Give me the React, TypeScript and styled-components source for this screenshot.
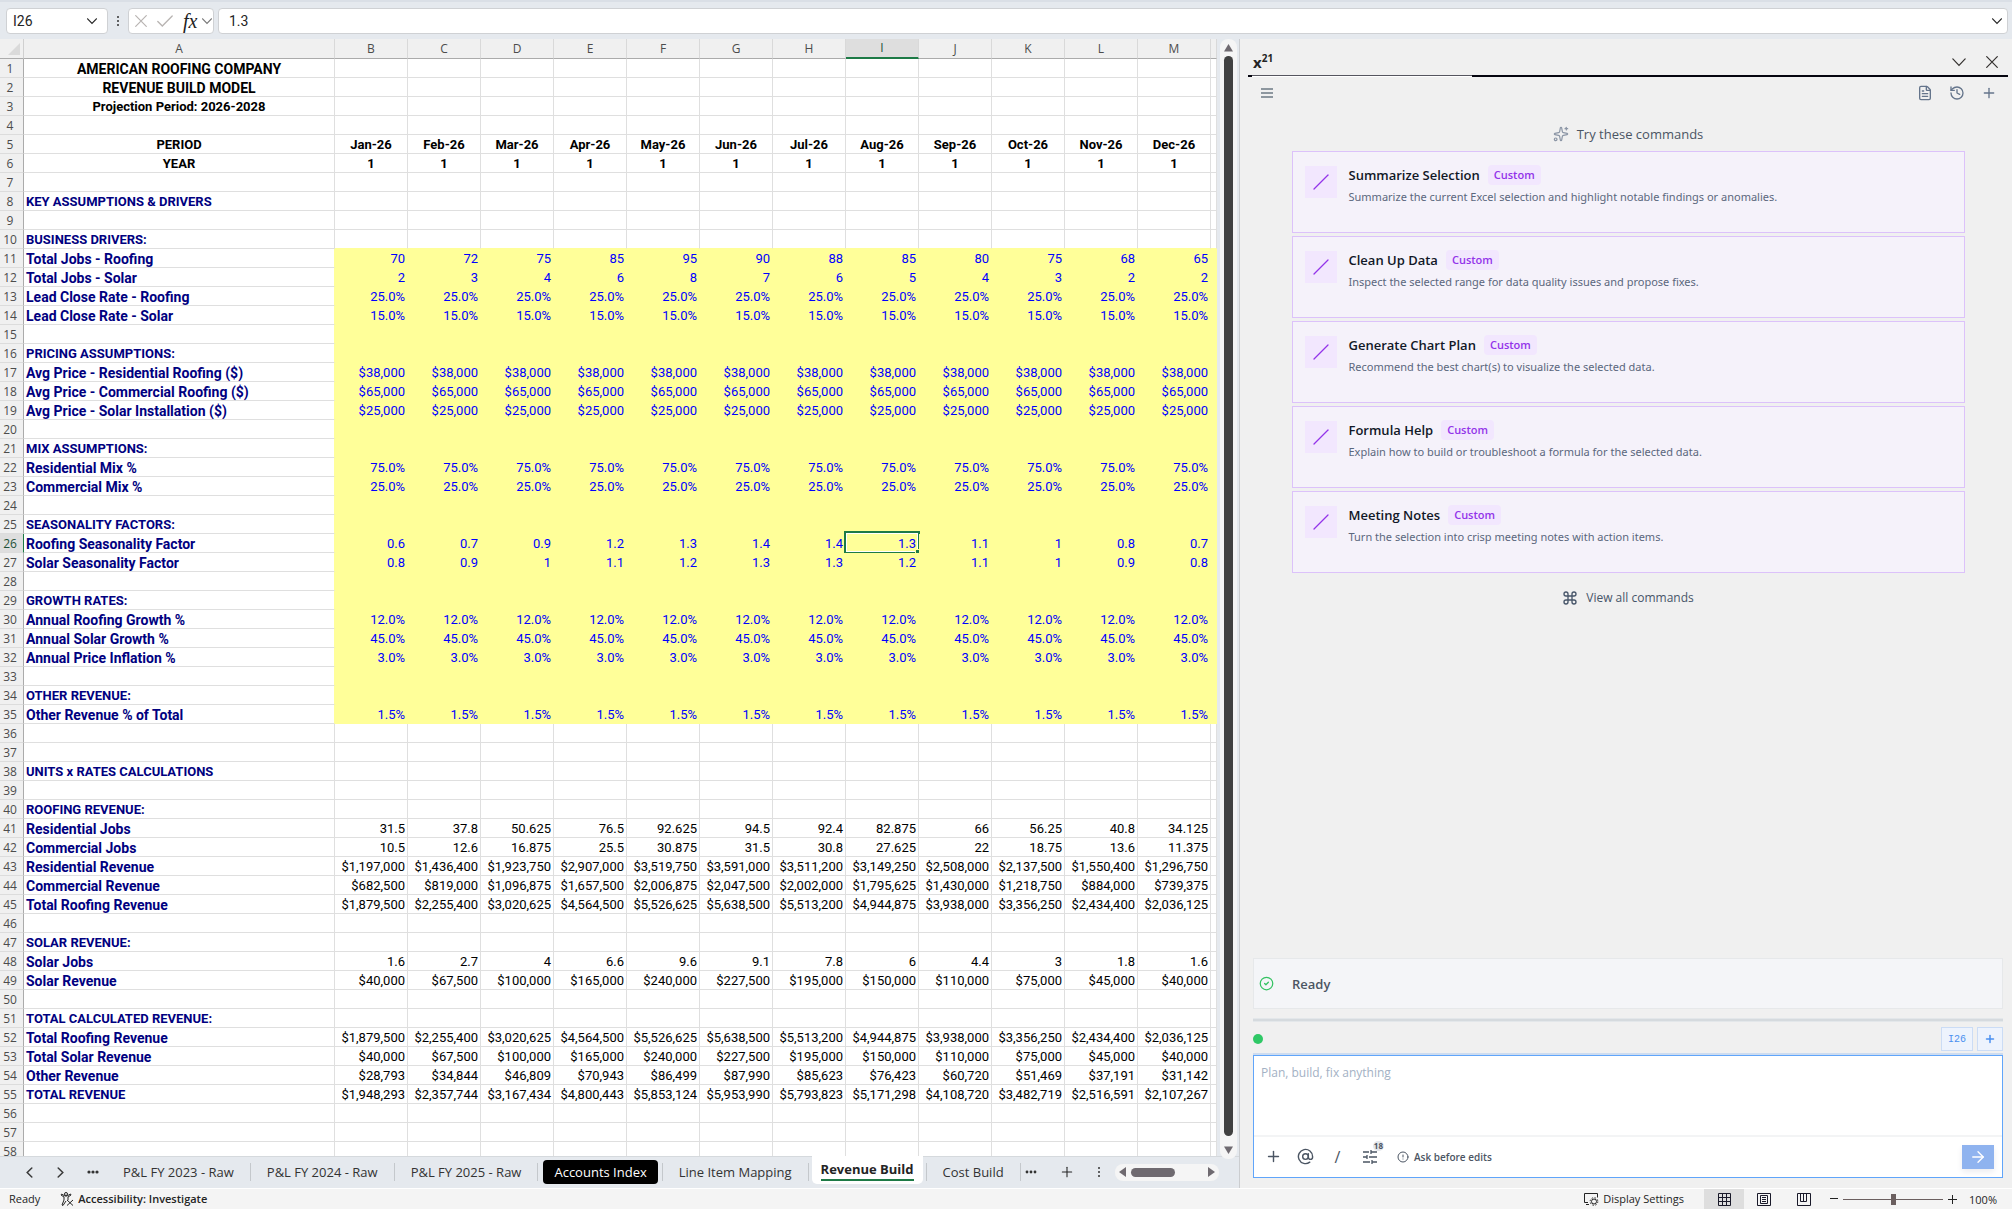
import React from "react";
import styled, { createGlobalStyle, css } from "styled-components";
import {
  ArrowRight,
  AtSign,
  CircleAlert,
  CircleCheck,
  Command,
  FileText,
  History,
  Plus,
  Sparkles,
} from "lucide-react";

const uiFont = '"Open Sans", "Noto Sans", sans-serif';
const cellFont = 'Roboto, "Liberation Sans", sans-serif';

const Global = createGlobalStyle`
  *, *::before, *::after { box-sizing: border-box; }
  body { margin: 0; background: #e5e9ee; color: #242424; font-family: ${uiFont}; }
  button, input, textarea { font: inherit; color: inherit; margin: 0; }
  button { display: inline-flex; align-items: center; justify-content: center; padding: 0; border: 0; background: none; cursor: pointer; flex: none; }
  svg { flex: none; }
`;

const Window = styled.div`
  display: flex;
  flex-direction: column;
  height: 100vh;
  overflow: hidden;
`;

/* ---------- formula bar ---------- */

const FormulaBar = styled.header`
  display: flex;
  align-items: center;
  flex: none;
  height: 39px;
  padding: 0 4px 0 6px;
  border-top: 2px solid #dadfe6;
  background: #e5e9ee;
`;

const barBox = css`
  display: flex;
  align-items: center;
  height: 26px;
  border: 1px solid #cfd1d4;
  border-radius: 4px;
  background: #fff;
`;

const NameBox = styled.label`
  ${barBox}
  width: 102px;
  padding: 0 10px 0 6px;
`;

const BarInput = styled.input`
  flex: 1;
  min-width: 0;
  padding: 0;
  border: 0;
  outline: 0;
  background: none;
  font-family: ${cellFont};
  font-size: 14px;
  line-height: 20px;
`;

const BarDots = styled.span`
  display: flex;
  justify-content: center;
  width: 20px;
`;

const FxBox = styled.div`
  ${barBox}
  gap: 10px;
  width: 86px;
  padding: 0 0 0 6px;
  color: #b8b4b2;
`;

const FxButtons = styled.span`
  display: flex;
  align-items: center;
  gap: 5px;
  color: #777;
`;

const FxButton = styled.button`
  color: #222;
  font-family: "Liberation Serif", serif;
  font-size: 20px;
  font-style: italic;
  line-height: 20px;
`;

const FormulaBox = styled.label`
  ${barBox}
  flex: 1;
  margin-left: 4px;
  padding: 0 5px 0 10px;
`;

/* ---------- main split ---------- */

const Main = styled.main`
  display: grid;
  grid-template-columns: minmax(0, 1fr) 773px;
  flex: 1;
  min-height: 0;
`;

const Workbook = styled.section`
  display: flex;
  flex-direction: column;
  min-width: 0;
  min-height: 0;
`;

const SheetArea = styled.div`
  display: flex;
  flex: 1;
  min-height: 0;
`;

const SheetClip = styled.div`
  flex: 1;
  min-width: 0;
  overflow: hidden;
  background: #fff;
`;

const Sheet = styled.table`
  width: 100%;
  table-layout: fixed;
  border-collapse: separate;
  border-spacing: 0;
  font-family: ${cellFont};
  font-size: 13px;
  line-height: 16px;
`;

const Col = styled.col<{ $w?: number }>`
  width: ${(p) => (p.$w ? `${p.$w}px` : "auto")};
`;

const Corner = styled.td`
  height: 20px;
  padding: 0 3px 3px 0;
  border-right: 1px solid #d0d0d0;
  border-bottom: 1px solid #ababab;
  background: #f0f0f0;
  vertical-align: bottom;
  text-align: right;
  line-height: 0;
`;

const ColHead = styled.th<{ $active?: boolean }>`
  height: 20px;
  padding: 0;
  border-right: 1px solid #d9d9d9;
  border-bottom: ${(p) => (p.$active ? "2px solid #1d7a46" : "1px solid #ababab")};
  background: ${(p) => (p.$active ? "#dedede" : "#f0f0f0")};
  color: ${(p) => (p.$active ? "#1e5138" : "#4c4c4c")};
  font-family: ${uiFont};
  font-size: 12px;
  font-weight: 400;
  line-height: 18px;
`;

const RowHead = styled.th<{ $active?: boolean }>`
  height: 19px;
  padding: 2px 3px 0 0;
  border-right: 1px solid ${(p) => (p.$active ? "#1d7a46" : "#ababab")};
  border-bottom: 1px solid #dcdcdc;
  background: ${(p) => (p.$active ? "#dedede" : "#f0f0f0")};
  color: ${(p) => (p.$active ? "#1e5138" : "#4c4c4c")};
  font-family: ${uiFont};
  font-size: 12px;
  font-weight: 400;
  text-align: center;
`;

type Tone = "title" | "label" | "plain" | "input";

const Cell = styled.td<{
  $tone?: Tone;
  $align?: "left" | "center" | "right";
  $large?: boolean;
  $fill?: boolean;
  $rightFill?: boolean;
  $bottomFill?: boolean;
}>`
  position: relative;
  height: 19px;
  padding: 2px 2px 0;
  border-right: 1px solid ${(p) => (p.$fill || p.$rightFill ? "#ffff99" : "#dfdfdf")};
  border-bottom: 1px solid ${(p) => (p.$fill || p.$bottomFill ? "#ffff99" : "#dfdfdf")};
  background: ${(p) => (p.$fill ? "#ffff99" : "#fff")};
  color: ${(p) => (p.$tone === "label" ? "#000080" : p.$tone === "input" ? "#0000ff" : "#000")};
  font-size: ${(p) => (p.$large ? 14 : 13)}px;
  font-weight: ${(p) => (p.$tone === "label" || p.$tone === "title" ? 700 : 400)};
  text-align: ${(p) => p.$align ?? "right"};
  white-space: nowrap;
`;

const Selection = styled.span`
  position: absolute;
  inset: -3px -2px -2px -2px;
  border: 2px solid #1d7a46;
  box-shadow: inset 0 0 0 1px #fff;

  &::after {
    content: "";
    position: absolute;
    right: -4px;
    bottom: -4px;
    width: 7px;
    height: 7px;
    border: 1px solid #ffff99;
    background: #1d7a46;
  }
`;

/* ---------- scrollbars ---------- */

const Gutter = styled.div`
  display: flex;
  flex: none;
  width: 22px;
  margin-bottom: -3px;
  padding-left: 3px;
  z-index: 1;
`;

const VTrack = styled.div`
  display: flex;
  flex-direction: column;
  align-items: center;
  gap: 4px;
  width: 17px;
  padding: 5px 0;
  border-radius: 8px;
  background: #f5f5f5;
`;

const VThumb = styled.div`
  flex: 1;
  width: 9px;
  margin-bottom: 6px;
  border-radius: 5px;
  background: #414141;
`;

const HTrack = styled.div`
  display: flex;
  align-items: center;
  width: 104px;
  height: 17px;
  padding: 0 4px;
  border-radius: 8px;
  background: #f5f5f5;
`;

const HThumb = styled.div`
  width: 44px;
  height: 9px;
  margin: 0 auto 0 5px;
  border-radius: 5px;
  background: #6f6a70;
`;

/* ---------- sheet tabs ---------- */

const TabBar = styled.nav`
  display: flex;
  align-items: center;
  flex: none;
  height: 32px;
  padding: 0 20px 1px 26px;
  border-top: 1px solid #d5d9dd;
  background: #e5e9ee;
`;

const TabTools = styled.div`
  display: flex;
  align-items: center;
  justify-content: space-between;
  width: 73px;
  margin-right: 8px;
  color: #3a3a3a;
`;

const Tab = styled.button`
  height: 18px;
  padding: 0 16px;
  border-right: 1px solid #c4c8cc;
  color: #333;
  font-size: 13px;
  line-height: 18px;
  white-space: nowrap;
`;

const DarkTab = styled.button`
  height: 24px;
  margin: 0 4px 0 5px;
  padding: 0 11px;
  border-radius: 4px;
  background: #000;
  color: #fff;
  font-size: 13px;
  white-space: nowrap;
`;

const Divider = styled.span`
  width: 1px;
  height: 18px;
  background: #c4c8cc;
`;

const ActiveTab = styled.button`
  align-self: flex-start;
  height: 28px;
  margin: -1px 3px 0;
  padding: 0 9px;
  border-radius: 0 0 5px 5px;
  background: #fff;
  color: #242424;
  font-size: 13px;
  font-weight: 700;
  white-space: nowrap;

  span {
    border-bottom: 2px solid #1d7a46;
    line-height: 20px;
  }
`;

const TabActions = styled.div`
  display: flex;
  align-items: center;
  justify-content: space-between;
  width: 76px;
  margin: 0 14px 0 auto;
`;

/* ---------- side pane ---------- */

const Pane = styled.aside`
  display: flex;
  flex-direction: column;
  min-width: 0;
  padding: 0 4px 0 8px;
  border-left: 1px solid #cbcdd0;
  background: #f0f0f0;
`;

const PaneHeader = styled.header`
  display: flex;
  align-items: center;
  height: 36px;
  padding: 10px 10px 0 5px;
`;

const PaneTitle = styled.h1`
  margin: 0 auto 0 0;
  font-size: 15px;
  font-weight: 700;
  line-height: 20px;

  sup {
    font-size: 10px;
    line-height: 0;
  }
`;

const HeaderButtons = styled.div`
  display: flex;
  gap: 20px;
  color: #33302e;
`;

const Progress = styled.div`
  display: flex;
  height: 2px;
  background: #05050f;

  &::before {
    content: "";
    width: 29%;
    margin-left: 4px;
    border-top: 1px solid #55555f;
    background: #fff;
  }
`;

const PaneToolbar = styled.div`
  display: flex;
  align-items: center;
  gap: 16px;
  height: 32px;
  padding: 0 11px 0 13px;
  color: #64748b;

  button:first-child {
    margin-right: auto;
  }
`;

const Commands = styled.section`
  display: flex;
  flex-direction: column;
  flex: 1;
  gap: 3px;
  width: 100%;
  max-width: 673px;
  margin: 0 auto;
  padding-top: 12px;
`;

const CommandsTitle = styled.h2`
  display: flex;
  align-items: center;
  justify-content: center;
  gap: 8px;
  margin: 0 0 1px;
  color: #4b5563;
  font-size: 13px;
  font-weight: 400;
  line-height: 26px;

  svg {
    color: #8b95a5;
  }
`;

const Card = styled.button`
  align-items: flex-start;
  justify-content: flex-start;
  gap: 12px;
  height: 82px;
  padding: 14px 12px;
  border: 1px solid #dcc2fa;
  background: #f5f2fa;
  text-align: left;
`;

const CardIcon = styled.span`
  display: grid;
  place-items: center;
  width: 32px;
  height: 32px;
  background: #f2e7fe;
  color: #9333ea;
`;

const CardText = styled.span`
  display: flex;
  flex-direction: column;
  gap: 2px;
  margin-top: -1px;
`;

const CardHead = styled.span`
  display: flex;
  align-items: center;
  gap: 8px;
  color: #111827;
  font-size: 13px;
  font-weight: 600;
  line-height: 20px;
`;

const Badge = styled.span`
  padding: 0 6px;
  border-radius: 4px;
  background: #f2e7fe;
  color: #9333ea;
  font-size: 11px;
`;

const CardDesc = styled.span`
  color: #5b677d;
  font-family: "Noto Sans", "Open Sans", sans-serif;
  font-size: 11px;
  line-height: 20px;
`;

const ViewAll = styled.button`
  align-self: center;
  gap: 8px;
  margin-top: 12px;
  color: #475569;
  font-size: 12px;
  font-weight: 500;
  line-height: 20px;
`;

const PaneFooter = styled.footer`
  display: flex;
  flex-direction: column;
  padding: 0 5px 10px;
`;

const ReadyBox = styled.div`
  display: flex;
  align-items: center;
  gap: 18px;
  height: 51px;
  padding: 0 5px;
  border: 1px solid #e6e8ea;
  background: #f4f5f8;
  color: #4b5563;
  font-size: 13px;
  font-weight: 600;

  svg {
    color: #34c262;
  }
`;

const Grip = styled.div`
  height: 4px;
  margin: 9px 0 5px;
  border: 1px solid #e3e7ea;
  border-width: 1px 0;
  background: #d5dade;
`;

const ContextRow = styled.div`
  display: flex;
  align-items: center;
  gap: 4px;
  height: 24px;
`;

const Dot = styled.span`
  width: 10px;
  height: 10px;
  margin-right: auto;
  border-radius: 50%;
  background: #2fc866;
`;

const Chip = styled.button`
  height: 24px;
  padding: 0 6px;
  border: 1px solid #cbdcf5;
  background: #edf3fd;
  color: #4a90f0;
  font-family: "Liberation Mono", monospace;
  font-size: 10px;
`;

const Composer = styled.form`
  display: flex;
  flex-direction: column;
  height: 123px;
  margin-top: 4px;
  border: 1px solid #60a5fa;
  background: #fff;
  box-shadow: 0 -2px 0 #cddcf0;
`;

const Prompt = styled.textarea`
  flex: 1;
  padding: 8px 7px;
  border: 0;
  outline: 0;
  resize: none;
  background: none;
  font-size: 12px;
  line-height: 18px;

  &::placeholder {
    color: #a3b1c4;
    opacity: 1;
  }
`;

const ComposerBar = styled.div`
  display: flex;
  align-items: center;
  height: 42px;
  padding: 0 8px 1px 11px;
  border-top: 2px solid #f3f4f5;
  color: #4b5563;
`;

const ToolButton = styled.button`
  position: relative;
  width: 17px;
  height: 24px;
  margin-right: 15px;
`;

const Count = styled.span`
  position: absolute;
  top: -4px;
  right: -6px;
  padding: 0 1px;
  border-radius: 5px;
  background: #e3e6eb;
  font-size: 8px;
  font-weight: 700;
  line-height: 10px;
`;

const AskButton = styled.button`
  gap: 5px;
  margin: 0 auto 0 4px;
  font-size: 10px;
  font-weight: 600;
  line-height: 16px;
`;

const SendButton = styled.button`
  width: 32px;
  height: 24px;
  background: #8fb3ef;
  color: #fff;
  box-shadow: 0 3px 6px #ececf0;
`;

/* ---------- status bar ---------- */

const StatusBar = styled.footer`
  display: flex;
  align-items: center;
  flex: none;
  height: 21px;
  padding: 0 15px 0 9px;
  border-top: 1px solid #fff;
  background: #f4f4f4;
  color: #242424;
  font-size: 11px;
`;

const StatusItem = styled.button<{ $push?: boolean; $bold?: boolean }>`
  gap: 4px;
  margin-right: ${(p) => (p.$push ? "auto" : "20px")};
  font-weight: ${(p) => (p.$bold ? 600 : 400)};
  line-height: 16px;
`;

const ViewButton = styled.button<{ $active?: boolean }>`
  width: 40px;
  height: 20px;
  background: ${(p) => (p.$active ? "#dedede" : "none")};
`;

const ZoomControl = styled.div`
  display: flex;
  align-items: center;
  gap: 5px;
  margin: 0 12px 0 6px;
`;

const ZoomRange = styled.input`
  width: 100px;
  height: 12px;
  appearance: none;
  background: linear-gradient(#6b5f5f, #6b5f5f) center / 100% 1px no-repeat;

  &::-webkit-slider-thumb {
    appearance: none;
    width: 5px;
    height: 11px;
    background: #6b5f5f;
  }
`;

/* ---------- drawings ---------- */

const Dots = ({ vertical = false, r = 1 }: { vertical?: boolean; r?: number }) => (
  <svg width={vertical ? 4 : 12} height={vertical ? 12 : 4} viewBox={vertical ? "0 0 4 12" : "0 0 12 4"} fill="#333">
    {[2, 6, 10].map((c) => (
      <circle key={c} cx={vertical ? 2 : c} cy={vertical ? c : 2} r={r} />
    ))}
  </svg>
);

const Triangle = ({ points, w, h, fill = "#6f6a70" }: { points: string; w: number; h: number; fill?: string }) => (
  <svg width={w} height={h} viewBox={`0 0 ${w} ${h}`} fill={fill}>
    <polygon points={points} />
  </svg>
);

const Chevron = ({ size = 10 }: { size?: number }) => (
  <svg width={size} height={size} viewBox="0 0 10 10" fill="none" stroke="currentColor" strokeWidth={12 / size} strokeLinecap="round">
    <path d="M.6 2.800 5 7.400 9.400 2.800" />
  </svg>
);

const SideChevron = ({ d }: { d: string }) => (
  <svg width="7" height="11" viewBox="0 0 7 11" fill="none" stroke="currentColor" strokeWidth="1.5" strokeLinecap="round">
    <path d={d} />
  </svg>
);

const Cross = () => (
  <svg width="12" height="12" viewBox="0 0 12 12" stroke="currentColor" strokeWidth="1.2" strokeLinecap="round">
    <path d="M.7.7l10.600 10.600M11.300.7.7 11.300" />
  </svg>
);

const Tick = () => (
  <svg width="16" height="12" viewBox="0 0 16 12" fill="none" stroke="currentColor" strokeWidth="1.3" strokeLinecap="round">
    <path d="M.8 6.500 5.300 11 15.200 1" />
  </svg>
);

const MenuLines = () => (
  <svg width="12" height="12" viewBox="0 0 12 12" stroke="#8d979f" strokeWidth="2">
    <path d="M0 2h12M0 6h12M0 10h12" />
  </svg>
);

const Slash = () => (
  <svg width="16" height="16" viewBox="0 0 16 16" stroke="currentColor" strokeWidth="1.3" strokeLinecap="round">
    <path d="M1 15 15 1" />
  </svg>
);

const Tuning = () => (
  <svg width="14" height="14" viewBox="0 0 14 14" stroke="currentColor" strokeWidth="1.3" fill="none">
    <path d="M0 2h6M8 2h6M8 0v4M0 7h4M6 7h8M4 5v4M0 12h7M9 12h5M9 10v4" />
  </svg>
);

const Accessibility = () => (
  <svg width="14" height="14" viewBox="0 0 14 14" stroke="currentColor" fill="none">
    <circle cx="6" cy="2" r="1.5" />
    <path d="M1 3l3 2v3l-2 5 1 .5L6 9M11 3L8 5v3M1 3l.6-.9L5 4h2l3.500-2 .5 1M7 8l6 5.500M13 8l-6 5.500" />
  </svg>
);

const DisplayGear = () => (
  <svg width="15" height="13" viewBox="0 0 15 13" stroke="currentColor" fill="none">
    <path d="M4 9.500H.5V.5h13v4M2 11.500h3" />
    <circle cx="10" cy="8.500" r="2.500" />
    <circle cx="10" cy="8.500" r="3.800" strokeDasharray="1.500 1.500" />
  </svg>
);

const GridView = () => (
  <svg width="13" height="13" viewBox="0 0 13 13" stroke="#1a1a2a" fill="none">
    <path d="M.5.5h12v12H.5zM4.500.5v12M8.500.5v12M.5 4.500h12M.5 8.500h12" />
  </svg>
);

const PageView = () => (
  <svg width="14" height="13" viewBox="0 0 14 13" stroke="#1a1a2a" fill="none">
    <path d="M.5.5h13v12H.5zM3.500 2.500h7v8h-7zM5 4.500h4M5 6.500h4M5 8.500h4" />
  </svg>
);

const BreakView = () => (
  <svg width="14" height="13" viewBox="0 0 14 13" stroke="#1a1a2a" fill="none">
    <path d="M.5.5h13v12H.5zM3.500.5v8h6v-8M6.500.5v8" />
  </svg>
);

/* ---------- data ---------- */

const columns = ["B", "C", "D", "E", "F", "G", "H", "I", "J", "K", "L", "M"];
const months = ["Jan", "Feb", "Mar", "Apr", "May", "Jun", "Jul", "Aug", "Sep", "Oct", "Nov", "Dec"];
const every = (value: string) => columns.map(() => value);
const list = (text: string) => text.split(" ");

const roofing = list("$1,879,500 $2,255,400 $3,020,625 $4,564,500 $5,526,625 $5,638,500 $5,513,200 $4,944,875 $3,938,000 $3,356,250 $2,434,400 $2,036,125");
const solar = list("$40,000 $67,500 $100,000 $165,000 $240,000 $227,500 $195,000 $150,000 $110,000 $75,000 $45,000 $40,000");

type Line = { label: string; values?: string[]; heading?: boolean };

const lines: Record<number, Line> = {
  1: { label: "AMERICAN ROOFING COMPANY", heading: true },
  2: { label: "REVENUE BUILD MODEL", heading: true },
  3: { label: "Projection Period: 2026-2028", heading: true },
  5: { label: "PERIOD", heading: true, values: months.map((m) => `${m}-26`) },
  6: { label: "YEAR", heading: true, values: every("1") },
  8: { label: "KEY ASSUMPTIONS & DRIVERS" },
  10: { label: "BUSINESS DRIVERS:" },
  11: { label: "Total Jobs - Roofing", values: list("70 72 75 85 95 90 88 85 80 75 68 65") },
  12: { label: "Total Jobs - Solar", values: list("2 3 4 6 8 7 6 5 4 3 2 2") },
  13: { label: "Lead Close Rate - Roofing", values: every("25.0%") },
  14: { label: "Lead Close Rate - Solar", values: every("15.0%") },
  16: { label: "PRICING ASSUMPTIONS:" },
  17: { label: "Avg Price - Residential Roofing ($)", values: every("$38,000") },
  18: { label: "Avg Price - Commercial Roofing ($)", values: every("$65,000") },
  19: { label: "Avg Price - Solar Installation ($)", values: every("$25,000") },
  21: { label: "MIX ASSUMPTIONS:" },
  22: { label: "Residential Mix %", values: every("75.0%") },
  23: { label: "Commercial Mix %", values: every("25.0%") },
  25: { label: "SEASONALITY FACTORS:" },
  26: { label: "Roofing Seasonality Factor", values: list("0.6 0.7 0.9 1.2 1.3 1.4 1.4 1.3 1.1 1 0.8 0.7") },
  27: { label: "Solar Seasonality Factor", values: list("0.8 0.9 1 1.1 1.2 1.3 1.3 1.2 1.1 1 0.9 0.8") },
  29: { label: "GROWTH RATES:" },
  30: { label: "Annual Roofing Growth %", values: every("12.0%") },
  31: { label: "Annual Solar Growth %", values: every("45.0%") },
  32: { label: "Annual Price Inflation %", values: every("3.0%") },
  34: { label: "OTHER REVENUE:" },
  35: { label: "Other Revenue % of Total", values: every("1.5%") },
  38: { label: "UNITS x RATES CALCULATIONS" },
  40: { label: "ROOFING REVENUE:" },
  41: { label: "Residential Jobs", values: list("31.5 37.8 50.625 76.5 92.625 94.5 92.4 82.875 66 56.25 40.8 34.125") },
  42: { label: "Commercial Jobs", values: list("10.5 12.6 16.875 25.5 30.875 31.5 30.8 27.625 22 18.75 13.6 11.375") },
  43: { label: "Residential Revenue", values: list("$1,197,000 $1,436,400 $1,923,750 $2,907,000 $3,519,750 $3,591,000 $3,511,200 $3,149,250 $2,508,000 $2,137,500 $1,550,400 $1,296,750") },
  44: { label: "Commercial Revenue", values: list("$682,500 $819,000 $1,096,875 $1,657,500 $2,006,875 $2,047,500 $2,002,000 $1,795,625 $1,430,000 $1,218,750 $884,000 $739,375") },
  45: { label: "Total Roofing Revenue", values: roofing },
  47: { label: "SOLAR REVENUE:" },
  48: { label: "Solar Jobs", values: list("1.6 2.7 4 6.6 9.6 9.1 7.8 6 4.4 3 1.8 1.6") },
  49: { label: "Solar Revenue", values: solar },
  51: { label: "TOTAL CALCULATED REVENUE:" },
  52: { label: "Total Roofing Revenue", values: roofing },
  53: { label: "Total Solar Revenue", values: solar },
  54: { label: "Other Revenue", values: list("$28,793 $34,844 $46,809 $70,943 $86,499 $87,990 $85,623 $76,423 $60,720 $51,469 $37,191 $31,142") },
  55: { label: "TOTAL REVENUE", values: list("$1,948,293 $2,357,744 $3,167,434 $4,800,443 $5,853,124 $5,953,990 $5,793,823 $5,171,298 $4,108,720 $3,482,719 $2,516,591 $2,107,267") },
};

const rowNumbers = Array.from({ length: 58 }, (_, i) => i + 1);

const commands = [
  ["Summarize Selection", "Summarize the current Excel selection and highlight notable findings or anomalies."],
  ["Clean Up Data", "Inspect the selected range for data quality issues and propose fixes."],
  ["Generate Chart Plan", "Recommend the best chart(s) to visualize the selected data."],
  ["Formula Help", "Explain how to build or troubleshoot a formula for the selected data."],
  ["Meeting Notes", "Turn the selection into crisp meeting notes with action items."],
];

const SheetRow = ({ n }: { n: number }) => {
  const line = lines[n];
  const fill = n >= 11 && n <= 35;
  const tone: Tone = fill ? "input" : line?.heading ? "title" : "plain";
  const isItem = !!line?.values && /[a-z]/.test(line.label);
  return (
    <tr>
      <RowHead scope="row" $active={n === 26}>{n}</RowHead>
      <Cell
        $tone={line?.heading ? "title" : "label"}
        $align={line?.heading ? "center" : "left"}
        $large={isItem || n <= 2}
        $rightFill={fill}
      >
        {line?.label}
      </Cell>
      {columns.map((c, i) => (
        <Cell key={c} $tone={tone} $align={line?.heading ? "center" : "right"} $fill={fill} $bottomFill={n === 10}>
          {line?.values?.[i]}
          {n === 26 && c === "I" && <Selection />}
        </Cell>
      ))}
      <Cell $fill={fill} $bottomFill={n === 10} />
    </tr>
  );
};

export default function App() {
  return (
    <Window>
      <Global />
      <FormulaBar>
        <NameBox>
          <BarInput aria-label="Name box" defaultValue="I26" />
          <Chevron />
        </NameBox>
        <BarDots><Dots vertical /></BarDots>
        <FxBox>
          <button aria-label="Cancel"><Cross /></button>
          <button aria-label="Enter"><Tick /></button>
          <FxButtons>
            <FxButton>fx</FxButton>
            <button aria-label="More functions"><Chevron /></button>
          </FxButtons>
        </FxBox>
        <FormulaBox>
          <BarInput aria-label="Formula" defaultValue="1.3" />
          <Chevron />
        </FormulaBox>
      </FormulaBar>

      <Main>
        <Workbook>
          <SheetArea>
            <SheetClip>
              <Sheet>
                <colgroup>
                  <Col $w={24} />
                  <Col $w={311} />
                  {columns.map((c) => <Col key={c} $w={73} />)}
                  <Col />
                </colgroup>
                <thead>
                  <tr>
                    <Corner><Triangle w={12} h={12} points="12,0 12,12 0,12" fill="#dadada" /></Corner>
                    <ColHead scope="col">A</ColHead>
                    {columns.map((c) => <ColHead key={c} scope="col" $active={c === "I"}>{c}</ColHead>)}
                    <ColHead />
                  </tr>
                </thead>
                <tbody>
                  {rowNumbers.map((n) => <SheetRow key={n} n={n} />)}
                </tbody>
              </Sheet>
            </SheetClip>
            <Gutter>
              <VTrack>
                <Triangle w={9} h={8} points="4.5,0 9,7.5 0,7.5" />
                <VThumb />
                <Triangle w={9} h={8} points="0,0.5 9,0.5 4.5,8" />
              </VTrack>
            </Gutter>
          </SheetArea>
          <TabBar>
            <TabTools>
              <button aria-label="Previous sheet"><SideChevron d="M5.800 1 1.200 5.500l4.600 4.500" /></button>
              <button aria-label="Next sheet"><SideChevron d="M1.200 1l4.600 4.500L1.200 10" /></button>
              <button aria-label="Hidden sheets"><Dots r={1.6} /></button>
            </TabTools>
            <Tab>P&amp;L FY 2023 - Raw</Tab>
            <Tab>P&amp;L FY 2024 - Raw</Tab>
            <Tab>P&amp;L FY 2025 - Raw</Tab>
            <DarkTab>Accounts Index</DarkTab>
            <Divider />
            <Tab>Line Item Mapping</Tab>
            <ActiveTab><span>Revenue Build</span></ActiveTab>
            <Divider />
            <Tab>Cost Build</Tab>
            <TabActions>
              <button aria-label="More sheets"><Dots r={1.4} /></button>
              <button aria-label="New sheet"><Plus size={16} strokeWidth={1.6} /></button>
              <Dots vertical />
            </TabActions>
            <HTrack>
              <Triangle w={7} h={10} points="7,0 7,10 0,5" />
              <HThumb />
              <Triangle w={7} h={10} points="0,0 0,10 7,5" />
            </HTrack>
          </TabBar>
        </Workbook>

        <Pane>
          <PaneHeader>
            <PaneTitle>x<sup>21</sup></PaneTitle>
            <HeaderButtons>
              <button aria-label="Collapse pane"><Chevron size={14} /></button>
              <button aria-label="Close pane"><Cross /></button>
            </HeaderButtons>
          </PaneHeader>
          <Progress />
          <PaneToolbar>
            <button aria-label="Menu"><MenuLines /></button>
            <button aria-label="Documents"><FileText size={16} /></button>
            <button aria-label="History"><History size={16} /></button>
            <button aria-label="New chat"><Plus size={16} /></button>
          </PaneToolbar>
          <Commands>
            <CommandsTitle><Sparkles size={16} strokeWidth={1.8} />Try these commands</CommandsTitle>
            {commands.map(([name, desc]) => (
              <Card key={name}>
                <CardIcon><Slash /></CardIcon>
                <CardText>
                  <CardHead>{name}<Badge>Custom</Badge></CardHead>
                  <CardDesc>{desc}</CardDesc>
                </CardText>
              </Card>
            ))}
            <ViewAll><Command size={16} />View all commands</ViewAll>
          </Commands>
          <PaneFooter>
            <ReadyBox><CircleCheck size={15} />Ready</ReadyBox>
            <Grip />
            <ContextRow>
              <Dot />
              <Chip>I26</Chip>
              <Chip aria-label="Add context"><Plus size={12} strokeWidth={3} /></Chip>
            </ContextRow>
            <Composer onSubmit={(e) => e.preventDefault()}>
              <Prompt aria-label="Message" placeholder="Plan, build, fix anything" />
              <ComposerBar>
                <ToolButton type="button" aria-label="Attach"><Plus size={17} /></ToolButton>
                <ToolButton type="button" aria-label="Mention"><AtSign size={17} /></ToolButton>
                <ToolButton type="button" aria-label="Commands">/</ToolButton>
                <ToolButton type="button" aria-label="Tools"><Tuning /><Count>18</Count></ToolButton>
                <AskButton type="button"><CircleAlert size={12} />Ask before edits</AskButton>
                <SendButton aria-label="Send"><ArrowRight size={18} strokeWidth={1.8} /></SendButton>
              </ComposerBar>
            </Composer>
          </PaneFooter>
        </Pane>
      </Main>

      <StatusBar>
        <StatusItem as="span">Ready</StatusItem>
        <StatusItem $push $bold><Accessibility />Accessibility: Investigate</StatusItem>
        <StatusItem><DisplayGear />Display Settings</StatusItem>
        <ViewButton $active aria-label="Normal view"><GridView /></ViewButton>
        <ViewButton aria-label="Page layout"><PageView /></ViewButton>
        <ViewButton aria-label="Page break preview"><BreakView /></ViewButton>
        <ZoomControl>
          <button aria-label="Zoom out"><svg width="8" height="8" stroke="#222"><path d="M0 3.500h8" /></svg></button>
          <ZoomRange type="range" aria-label="Zoom" defaultValue={50} />
          <button aria-label="Zoom in"><svg width="9" height="9" stroke="#222"><path d="M0 4.500h9M4.500 0v9" /></svg></button>
        </ZoomControl>
        <span>100%</span>
      </StatusBar>
    </Window>
  );
}
